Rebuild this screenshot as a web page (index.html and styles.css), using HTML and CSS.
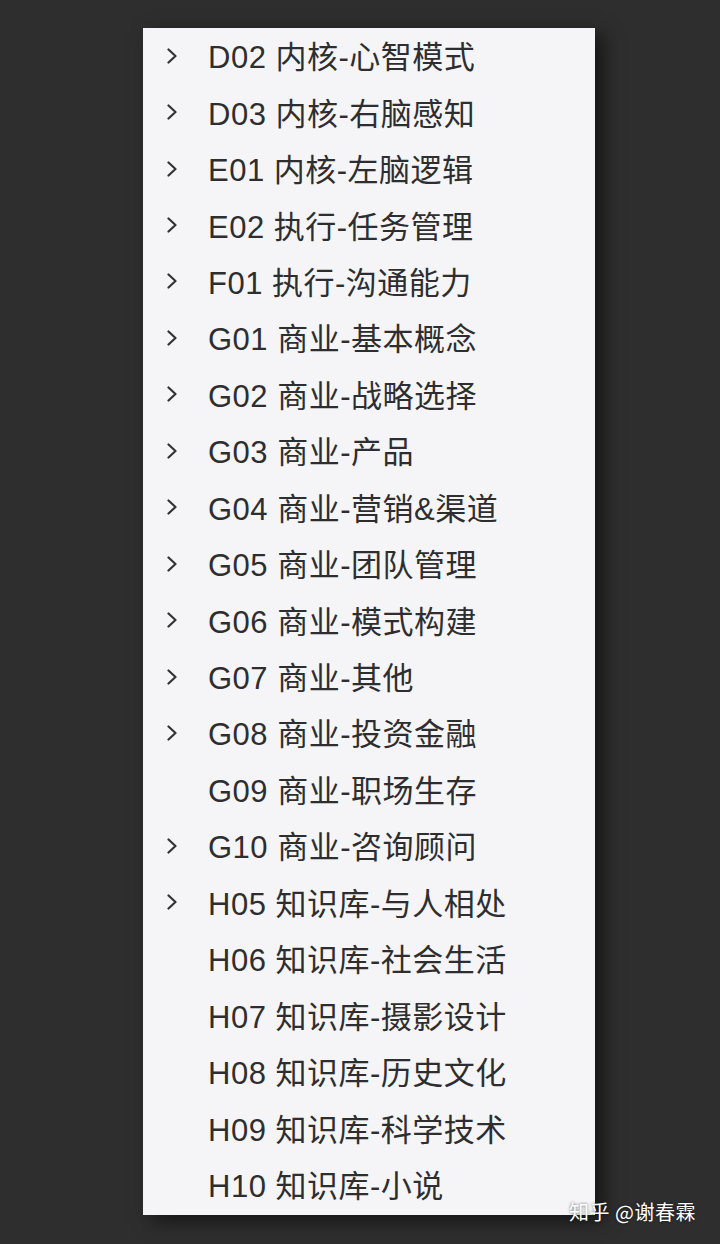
FILE: index.html
```html
<!DOCTYPE html>
<html lang="zh">
<head>
<meta charset="utf-8">
<link rel="stylesheet" href="styles.css">
</head>
<body>
<div class="stage">
  <ul class="panel">
    <li class="row"><span class="chev"><svg viewBox="0 0 10 16" width="10" height="16"><polyline points="1.5,1.5 8.5,8 1.5,14.5"/></svg></span><span class="label">D02 内核-心智模式</span></li>
    <li class="row"><span class="chev"><svg viewBox="0 0 10 16" width="10" height="16"><polyline points="1.5,1.5 8.5,8 1.5,14.5"/></svg></span><span class="label">D03 内核-右脑感知</span></li>
    <li class="row"><span class="chev"><svg viewBox="0 0 10 16" width="10" height="16"><polyline points="1.5,1.5 8.5,8 1.5,14.5"/></svg></span><span class="label">E01 内核-左脑逻辑</span></li>
    <li class="row"><span class="chev"><svg viewBox="0 0 10 16" width="10" height="16"><polyline points="1.5,1.5 8.5,8 1.5,14.5"/></svg></span><span class="label">E02 执行-任务管理</span></li>
    <li class="row"><span class="chev"><svg viewBox="0 0 10 16" width="10" height="16"><polyline points="1.5,1.5 8.5,8 1.5,14.5"/></svg></span><span class="label">F01 执行-沟通能力</span></li>
    <li class="row"><span class="chev"><svg viewBox="0 0 10 16" width="10" height="16"><polyline points="1.5,1.5 8.5,8 1.5,14.5"/></svg></span><span class="label">G01 商业-基本概念</span></li>
    <li class="row"><span class="chev"><svg viewBox="0 0 10 16" width="10" height="16"><polyline points="1.5,1.5 8.5,8 1.5,14.5"/></svg></span><span class="label">G02 商业-战略选择</span></li>
    <li class="row"><span class="chev"><svg viewBox="0 0 10 16" width="10" height="16"><polyline points="1.5,1.5 8.5,8 1.5,14.5"/></svg></span><span class="label">G03 商业-产品</span></li>
    <li class="row"><span class="chev"><svg viewBox="0 0 10 16" width="10" height="16"><polyline points="1.5,1.5 8.5,8 1.5,14.5"/></svg></span><span class="label">G04 商业-营销&amp;渠道</span></li>
    <li class="row"><span class="chev"><svg viewBox="0 0 10 16" width="10" height="16"><polyline points="1.5,1.5 8.5,8 1.5,14.5"/></svg></span><span class="label">G05 商业-团队管理</span></li>
    <li class="row"><span class="chev"><svg viewBox="0 0 10 16" width="10" height="16"><polyline points="1.5,1.5 8.5,8 1.5,14.5"/></svg></span><span class="label">G06 商业-模式构建</span></li>
    <li class="row"><span class="chev"><svg viewBox="0 0 10 16" width="10" height="16"><polyline points="1.5,1.5 8.5,8 1.5,14.5"/></svg></span><span class="label">G07 商业-其他</span></li>
    <li class="row"><span class="chev"><svg viewBox="0 0 10 16" width="10" height="16"><polyline points="1.5,1.5 8.5,8 1.5,14.5"/></svg></span><span class="label">G08 商业-投资金融</span></li>
    <li class="row"><span class="chev"></span><span class="label">G09 商业-职场生存</span></li>
    <li class="row"><span class="chev"><svg viewBox="0 0 10 16" width="10" height="16"><polyline points="1.5,1.5 8.5,8 1.5,14.5"/></svg></span><span class="label">G10 商业-咨询顾问</span></li>
    <li class="row"><span class="chev"><svg viewBox="0 0 10 16" width="10" height="16"><polyline points="1.5,1.5 8.5,8 1.5,14.5"/></svg></span><span class="label">H05 知识库-与人相处</span></li>
    <li class="row"><span class="chev"></span><span class="label">H06 知识库-社会生活</span></li>
    <li class="row"><span class="chev"></span><span class="label">H07 知识库-摄影设计</span></li>
    <li class="row"><span class="chev"></span><span class="label">H08 知识库-历史文化</span></li>
    <li class="row"><span class="chev"></span><span class="label">H09 知识库-科学技术</span></li>
    <li class="row"><span class="chev"></span><span class="label">H10 知识库-小说</span></li>
  </ul>
  <div class="watermark">知乎 @谢春霖</div>
</div>
</body>
</html>
```
FILE: styles.css
```css
html, body {
  margin: 0;
  padding: 0;
  background: #2e2e2e;
}
.stage {
  position: relative;
  width: 720px;
  height: 1244px;
  overflow: hidden;
  padding-top: 28px;
  box-sizing: border-box;
}
.panel {
  list-style: none;
  margin: 0 0 0 143px;
  padding: 0;
  width: 452px;
  height: 1187px;
  background: #f5f5f7;
  box-shadow: 8px 6px 18px rgba(0, 0, 0, 0.55);
}
.row {
  display: flex;
  align-items: center;
  height: 56.45px;
  font-family: "Liberation Sans", "Noto Sans CJK SC", sans-serif;
  font-size: 31px;
  color: #2e2e30;
}
.chev {
  width: 65px;
  height: 56px;
  display: flex;
  align-items: center;
  padding-left: 24px;
  box-sizing: border-box;
  margin-top: -1px;
}
.chev svg {
  fill: none;
  stroke: #333;
  stroke-width: 2.2;
  stroke-linecap: round;
  stroke-linejoin: round;
}
.label {
  white-space: nowrap;
  line-height: 1;
  letter-spacing: 0.5px;
  padding-top: 3px;
}
.watermark {
  position: absolute;
  left: 569px;
  top: 1199px;
  font-family: "Noto Sans CJK SC", sans-serif;
  font-size: 20px;
  line-height: 26px;
  color: #ffffff;
  letter-spacing: 0.5px;
  text-shadow: 0 0 3px rgba(0, 0, 0, 0.6);
}
```
